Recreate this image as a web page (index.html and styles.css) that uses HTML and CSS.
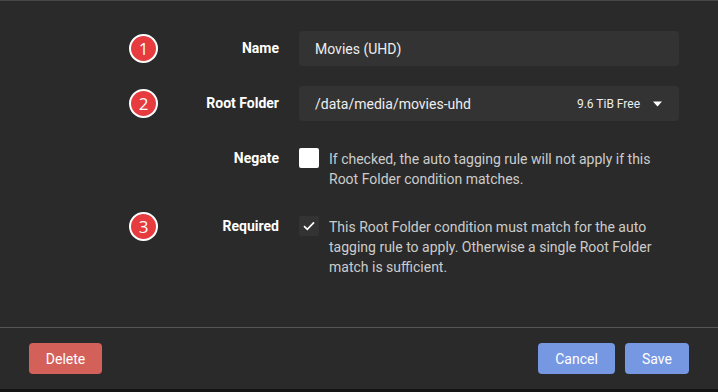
FILE: index.html
```html
<!DOCTYPE html>
<html>
<head>
<meta charset="utf-8">
<link rel="stylesheet" href="styles.css">
</head>
<body>
<div class="modal">
  <div class="modal-body">
    <div class="group">
      <span class="badge">1</span>
      <label class="label">Name</label>
      <div class="field"><div class="input">Movies (UHD)</div></div>
    </div>
    <div class="group">
      <span class="badge">2</span>
      <label class="label">Root Folder</label>
      <div class="field">
        <div class="input select">
          <span class="path">/data/media/movies-uhd</span>
          <span class="free">9.6 TiB Free</span>
          <svg class="caret" width="9" height="6" viewBox="0 0 9 6"><path d="M0 0.5h9L4.5 5.5z" fill="#fff"/></svg>
        </div>
      </div>
    </div>
    <div class="group">
      <label class="label">Negate</label>
      <div class="field check">
        <span class="box box-white"></span>
        <p class="help">If checked, the auto tagging rule will not apply if this Root Folder condition matches.</p>
      </div>
    </div>
    <div class="group">
      <span class="badge">3</span>
      <label class="label">Required</label>
      <div class="field check">
        <span class="box box-dark"><svg width="12" height="10" viewBox="0 0 12 10"><path d="M1 5.2l3.3 3.1L11 1.3" fill="none" stroke="#fff" stroke-width="1.7"/></svg></span>
        <p class="help">This Root Folder condition must match for the auto tagging rule to apply. Otherwise a single Root Folder match is sufficient.</p>
      </div>
    </div>
  </div>
  <div class="modal-footer">
    <button class="btn btn-danger">Delete</button>
    <div class="right">
      <button class="btn btn-primary">Cancel</button>
      <button class="btn btn-primary">Save</button>
    </div>
  </div>
</div>
</body>
</html>
```

FILE: styles.css
```css
html, body {
  margin: 0;
  padding: 0;
  background: #141414;
  font-family: Roboto, "Open Sans", "Liberation Sans", sans-serif;
  font-size: 14px;
}
.modal {
  width: 718px;
  height: 389px;
  background: #2a2a2a;
  border-top: 1px solid #474747;
  box-sizing: border-box;
  display: flex;
  flex-direction: column;
}
.modal-body {
  padding: 30px 0 10px 0;
  height: 326px;
  box-sizing: border-box;
}
.group {
  position: relative;
  display: grid;
  grid-template-columns: 279px 380px;
  column-gap: 20px;
  margin-bottom: 20px;
}
.badge {
  position: absolute;
  left: 129px;
  top: 3px;
  width: 25px;
  height: 25px;
  border: 2px solid #fff;
  border-radius: 50%;
  background: #e63b3f;
  color: #fff;
  font-family: "Open Sans", "Liberation Sans", sans-serif;
  font-size: 17px;
  line-height: 25px;
  text-align: center;
}
.label {
  text-align: right;
  font-weight: bold;
  color: #fff;
  line-height: 35px;
  height: 35px;
}
.input {
  height: 35px;
  background: #333333;
  border-radius: 4px;
  color: #eeeeee;
  padding: 0 16px;
  display: flex;
  align-items: center;
  box-sizing: border-box;
  font-size: 14px;
}
.select .path { flex: 1; }
.select .free { font-size: 12px; color: #eee; margin-right: 13px; }
.caret { margin-right: 1px; }
.check {
  display: flex;
  align-items: flex-start;
  gap: 10px;
}
.box {
  flex: none;
  width: 20px;
  height: 20px;
  margin-top: 7px;
  border-radius: 2px;
  display: flex;
  align-items: center;
  justify-content: center;
}
.box-white { background: #ffffff; }
.box-dark { background: #333333; }
.help {
  margin: 8px 0 0 0;
  color: #cccccc;
  line-height: 20px;
  width: 340px;
}
.modal-footer {
  border-top: 1px solid #555555;
  flex: 1;
  display: flex;
  align-items: center;
  justify-content: space-between;
  padding: 0 29px;
}
.right { display: flex; gap: 10px; }
.btn {
  height: 31px;
  border: none;
  border-radius: 4px;
  color: #fff;
  font-family: Roboto, "Liberation Sans", sans-serif;
  font-size: 14px;
  padding: 0 16px;
  cursor: pointer;
}
.btn-danger { background: #d4605a; width: 73px; }
.btn-primary { background: #7698e3; }
.right .btn:first-child { width: 77px; }
.right .btn:last-child { width: 64px; }
```
